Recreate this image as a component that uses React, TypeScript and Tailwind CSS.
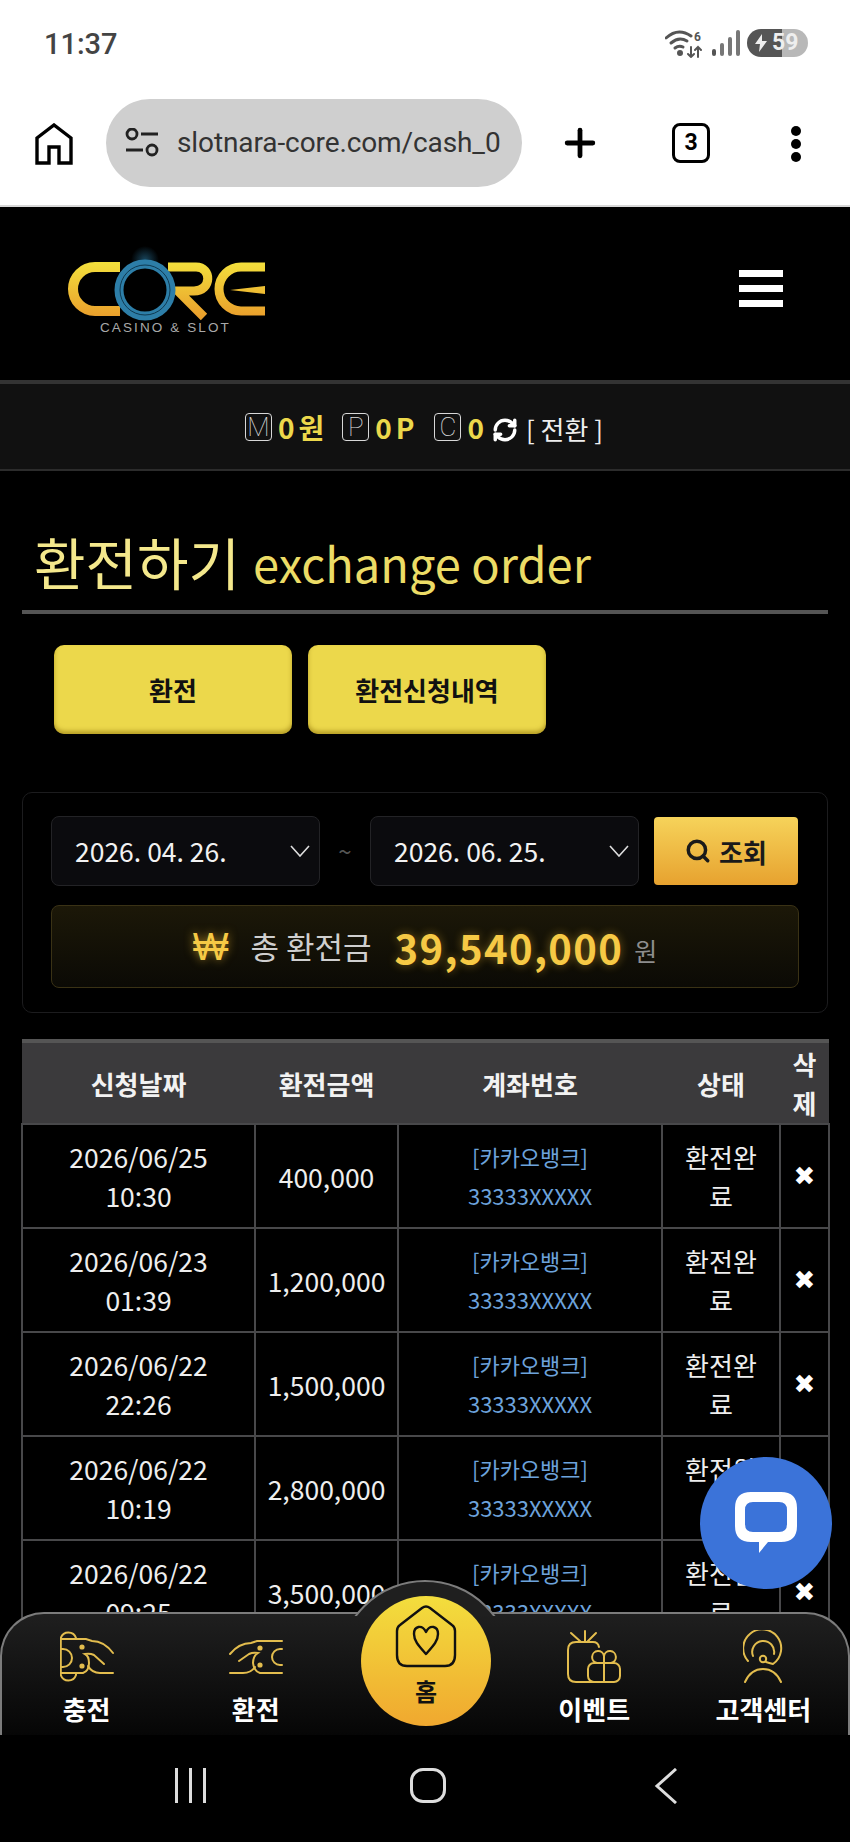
import { Plus, Search, RefreshCw } from "lucide-react";

const rows = [
  { date: "2026/06/25", time: "10:30", amount: "400,000" },
  { date: "2026/06/23", time: "01:39", amount: "1,200,000" },
  { date: "2026/06/22", time: "22:26", amount: "1,500,000" },
  { date: "2026/06/22", time: "10:19", amount: "2,800,000" },
  { date: "2026/06/22", time: "09:25", amount: "3,500,000" },
];

const Logo = () => (
  <svg width="250" height="120" viewBox="0 0 250 120" fill="none" aria-label="CORE CASINO & SLOT">
    <defs>
      <linearGradient id="gold" x1="0" y1="32" x2="0" y2="86" gradientUnits="userSpaceOnUse">
        <stop offset="0" stopColor="#f3e03c" />
        <stop offset="1" stopColor="#eaa02c" />
      </linearGradient>
      <radialGradient id="glow">
        <stop offset="0" stopColor="#2d7ea8" stopOpacity="0.55" />
        <stop offset="1" stopColor="#2d7ea8" stopOpacity="0" />
      </radialGradient>
    </defs>
    <circle cx="105" cy="30" r="14" fill="url(#glow)" />
    <path d="M80 37 H55 A22 22 0 0 0 55 81 H80" stroke="url(#gold)" strokeWidth="10" />
    <path d="M128 37 H156 C172 37 172 61 154 61 H138 L164 87" stroke="url(#gold)" strokeWidth="9" />
    <path d="M225 37 H201 A22 22 0 0 0 201 81 H225" stroke="url(#gold)" strokeWidth="9" />
    <polygon points="190,60 225,56 225,64" fill="url(#gold)" />
    <circle cx="105" cy="60" r="26" stroke="#2d7ea8" strokeWidth="9" fill="#000" />
    <circle cx="105" cy="60" r="25" stroke="#0f3a52" strokeWidth="1" />
    <text x="60" y="102" fill="#a9a9a9" fontSize="13.5" letterSpacing="2.1" fontFamily="'Liberation Sans', sans-serif">
      CASINO &amp; SLOT
    </text>
  </svg>
);

const TopHome = () => (
  <svg width="38" height="42" viewBox="0 0 38 42" fill="none" stroke="#000" strokeWidth="3.4" strokeLinejoin="miter">
    <path d="M2 40 V15 L19 2 L36 15 V40 H24 V24 H14 V40 Z" />
  </svg>
);

const ChargeIcon = () => (
  <svg width="54" height="53" viewBox="0 0 54 53" fill="none" stroke="#e3bd4e" strokeWidth="2" strokeLinecap="round">
    <path d="M16 9 V8 A8 8 0 0 0 0.8 8 V45 A8 8 0 0 0 16 45 V43" />
    <path d="M1 9 H26 L32 11 Q44 11 53 23" />
    <path d="M1 43 H23 Q29 41 29 33 Q29 26 25 24 Q30 23 34 25 L44 34" />
    <path d="M28 36 Q32 43 40 43 H53" />
    <path d="M1 19 H3 A9 9 0 0 1 3 37 H1" />
    <circle cx="22" cy="17" r="1.6" fill="#e3bd4e" />
    <circle cx="22" cy="36" r="1.6" fill="#e3bd4e" />
  </svg>
);

const ExchangeIcon = () => (
  <svg width="54" height="35" viewBox="0 0 54 35" fill="none" stroke="#e3bd4e" strokeWidth="2" strokeLinecap="round">
    <path d="M53 2 H28 L22 4 Q10 4 1 15" />
    <path d="M53 34 H31 Q25 32 24 24 Q24 17 29 14 Q24 13 20 15 L10 22" />
    <path d="M26 28 Q22 34 14 34 H1" />
    <path d="M53 10 H51 A8 8 0 0 0 51 26 H53" />
    <circle cx="31" cy="9" r="1.6" fill="#e3bd4e" />
    <circle cx="31" cy="26" r="1.6" fill="#e3bd4e" />
  </svg>
);

const GiftIcon = () => (
  <svg width="54" height="53" viewBox="0 0 54 53" fill="none" stroke="#e3bd4e" strokeWidth="2" strokeLinecap="round">
    <path d="M18 1 V12 M4 3 L14 12 M29 3 L20 12" />
    <path d="M32 17 Q31 12 26 12 H9 Q1 12 1 20 V44 Q1 52 9 52 H29" />
    <rect x="21" y="33" width="32" height="19" rx="6" />
    <path d="M37 33 V52" />
    <path d="M37 33 H30 A6 6 0 1 1 37 26 Z" />
    <path d="M37 33 H44 A6 6 0 1 0 37 26 Z" />
  </svg>
);

const AgentIcon = () => (
  <svg width="40" height="53" viewBox="0 0 40 53" fill="none" stroke="#e3bd4e" strokeWidth="2" strokeLinecap="round">
    <path d="M5 31 A19 19 0 1 1 30 34 Q26 33 23 32" />
    <path d="M10 26 A11 11 0 1 1 31 24" />
    <circle cx="20" cy="29" r="3.2" />
    <path d="M2 52 C6 43 13 39 20 39 C27 39 34 43 38 52" />
  </svg>
);

const BalanceBadge = ({ letter }: { letter: string }) => (
  <span className="flex h-[28px] w-[27px] items-center justify-center rounded-[4px] border border-[#d8d8d8] font-['Roboto',sans-serif] text-[26px] leading-none font-thin text-[#e0e0e0]">
    {letter}
  </span>
);

const NavItem = ({ icon, label }: { icon: JSX.Element; label: string }) => (
  <div className="flex flex-col items-center">
    <div className="flex h-[53px] items-center">{icon}</div>
    <span className="mt-[8px] text-[26px] leading-[36px] font-bold text-white">{label}</span>
  </div>
);

const thClass = "text-[26px] font-bold text-[#f2f2f2]";
const tdClass = "border-2 border-[#48484a] text-center leading-[39px] bg-black";

export default function App() {
  return (
    <div className="relative h-[1842px] w-[850px] overflow-hidden bg-black font-['Noto_Sans_CJK_KR','Noto_Sans',sans-serif]">
      {/* status bar */}
      <div className="flex h-[85px] items-center justify-between bg-white pr-[42px] pl-[44px]">
        <span className="mt-[4px] font-['Roboto',sans-serif] text-[29px] font-medium text-[#444]">11:37</span>
        <div className="flex items-center gap-[7px]">
          <svg width="40" height="30" viewBox="0 0 40 30" fill="none" stroke="#555" strokeWidth="3" strokeLinecap="round">
            <path d="M1 10 Q13 -1 26 8" />
            <path d="M6 15 Q14 8 22 13" />
            <path d="M10 20 Q14 17 18 19" />
            <circle cx="15" cy="25" r="1.5" fill="#555" />
            <path d="M26 19 V29 M23 26 L26 29 L29 26 M33 29 V19 M30 22 L33 19 L36 22" strokeWidth="2" />
            <text x="29" y="13" fontSize="12" fontWeight="700" fill="#555" stroke="none" fontFamily="Roboto, sans-serif">6</text>
          </svg>
          <div className="flex h-[26px] items-end gap-[4px]">
            <span className="h-[7px] w-[4px] rounded-sm bg-[#555]" />
            <span className="h-[13px] w-[4px] rounded-sm bg-[#777]" />
            <span className="h-[19px] w-[4px] rounded-sm bg-[#777]" />
            <span className="h-[26px] w-[4px] rounded-sm bg-[#777]" />
          </div>
          <div className="flex h-[28px] w-[61px] items-center overflow-hidden rounded-full bg-[linear-gradient(90deg,#555_57%,#b8b8b8_57%)] pl-[8px]">
            <svg width="12" height="18" viewBox="0 0 12 18" fill="#eee">
              <path d="M7 0 L0 10 H5 L4 18 L12 7 H7 Z" />
            </svg>
            <span className="ml-[5px] font-['Roboto',sans-serif] text-[23px] leading-none font-bold text-[#eee]">59</span>
          </div>
        </div>
      </div>

      {/* browser bar */}
      <div className="flex h-[122px] items-start border-b-2 border-[#d8d8d8] bg-white pt-[14px]">
        <div className="mt-[24px] ml-[35px] flex w-[71px] items-start">
          <TopHome />
        </div>
        <div className="flex h-[88px] w-[416px] items-center overflow-hidden rounded-full bg-[#cfcfcf] pl-[19px]">
          <svg width="34" height="30" viewBox="0 0 34 30" fill="none" stroke="#222" strokeWidth="2.8" className="shrink-0">
            <circle cx="7" cy="6" r="5" />
            <path d="M16 6 H33 M1 22 H18" />
            <circle cx="27" cy="22" r="5" />
          </svg>
          <span className="ml-[18px] w-[326px] overflow-hidden font-['Roboto',sans-serif] text-[28px] tracking-[-0.1px] whitespace-nowrap text-[#333]">
            slotnara-core.com/cash_0
          </span>
        </div>
        <Plus size={44} strokeWidth={2.6} color="#000" className="mt-[22px] ml-[36px]" />
        <div className="mt-[24px] ml-[70px] flex h-[40px] w-[38px] items-center justify-center rounded-[8px] border-[3.5px] border-black font-['Roboto',sans-serif] text-[23px] font-bold text-black">
          3
        </div>
        <div className="mt-[27px] ml-[81px] flex flex-col gap-[3px]">
          <span className="h-[10px] w-[10px] rounded-full bg-black" />
          <span className="h-[10px] w-[10px] rounded-full bg-black" />
          <span className="h-[10px] w-[10px] rounded-full bg-black" />
        </div>
      </div>

      {/* site header */}
      <div className="flex h-[173px] items-center justify-between pr-[67px] pl-[40px]">
        <div className="mb-[8px]">
          <Logo />
        </div>
        <div className="mb-[10px] flex flex-col gap-[8px]">
          <span className="h-[7px] w-[44px] bg-white" />
          <span className="h-[7px] w-[44px] bg-white" />
          <span className="h-[7px] w-[44px] bg-white" />
        </div>
      </div>

      {/* balance bar */}
      <div className="flex h-[91px] items-center justify-center border-t-[4px] border-b-2 border-t-[#333] border-b-[#2c2c2c] bg-[#111] pr-[2px]">
        <BalanceBadge letter="M" />
        <span className="ml-[6px] text-[28px] font-bold tracking-[4px] text-[#ecd84b]">0원</span>
        <span className="ml-[14px]">
          <BalanceBadge letter="P" />
        </span>
        <span className="ml-[6px] text-[28px] font-bold tracking-[4px] text-[#ecd84b]">0P</span>
        <span className="ml-[16px]">
          <BalanceBadge letter="C" />
        </span>
        <span className="ml-[6px] text-[28px] font-bold text-[#ecd84b]">0</span>
        <RefreshCw size={26} strokeWidth={3.2} color="#fff" className="mt-[6px] ml-[8px]" />
        <span className="mt-[4px] ml-[8px] text-[26px] text-[#eee]">[ 전환 ]</span>
      </div>

      {/* page title */}
      <div className="mx-[22px] flex h-[143px] items-end border-b-[4px] border-[#555] pb-[11px] pl-[12px]">
        <h1 className="text-[56px] leading-[76px] font-normal text-[#f4e88c]">환전하기</h1>
        <span className="ml-[13px] text-[47px] leading-[72px] text-[#ecdc66]">exchange order</span>
      </div>

      {/* tabs */}
      <div className="mt-[31px] ml-[54px] flex gap-[16px]">
        <button className="h-[89px] w-[238px] rounded-[10px] bg-[#ecd84b] text-[26px] font-bold text-[#111] shadow-[inset_0_-3px_4px_rgba(130,100,0,0.5)]">
          환전
        </button>
        <button className="h-[89px] w-[238px] rounded-[10px] bg-[#ecd84b] text-[26px] font-bold text-[#111] shadow-[inset_0_-3px_4px_rgba(130,100,0,0.5)]">
          환전신청내역
        </button>
      </div>

      {/* filter panel */}
      <div className="mx-[22px] mt-[58px] rounded-[10px] border border-[#1c1c1e] px-[28px] pt-[23px] pb-[24px]">
        <div className="flex items-center">
          <div className="flex h-[70px] w-[269px] items-center justify-between rounded-[8px] border border-[#232326] bg-[#0b0b0e] pr-[9px] pl-[23px] text-[26.5px] text-[#f2f2f2]">
            2026. 04. 26.
            <svg width="20" height="12" viewBox="0 0 20 12" fill="none" stroke="#ddd" strokeWidth="1.6">
              <path d="M1 1 L10 11 L19 1" />
            </svg>
          </div>
          <span className="w-[50px] text-center text-[24px] text-[#555]">~</span>
          <div className="flex h-[70px] w-[269px] items-center justify-between rounded-[8px] border border-[#232326] bg-[#0b0b0e] pr-[9px] pl-[23px] text-[26.5px] text-[#f2f2f2]">
            2026. 06. 25.
            <svg width="20" height="12" viewBox="0 0 20 12" fill="none" stroke="#ddd" strokeWidth="1.6">
              <path d="M1 1 L10 11 L19 1" />
            </svg>
          </div>
          <button className="ml-[15px] flex h-[68px] w-[144px] items-center justify-center gap-[8px] rounded-[4px] bg-[linear-gradient(180deg,#f6d35a,#e7a22f)] text-[26px] font-bold text-[#1a1a1a]">
            <Search size={26} strokeWidth={3.2} color="#1a1a1a" />
            조회
          </button>
        </div>
        <div className="mt-[19px] flex h-[83px] items-center justify-center rounded-[8px] border border-[#3a3215] bg-[linear-gradient(180deg,#1c1808,#0b0a05)]">
          <span className="font-['Liberation_Sans',sans-serif] text-[38px] leading-none text-[#f6c945] [text-shadow:0_0_10px_rgba(246,190,50,0.6)]">₩</span>
          <span className="ml-[22px] text-[31px] text-[#cfcfcf]">총 환전금</span>
          <span className="ml-[23px] text-[40px] leading-none font-bold tracking-[1.4px] text-[#f6c945] [text-shadow:0_0_10px_rgba(246,190,50,0.45)]">39,540,000</span>
          <span className="mt-[8px] ml-[11px] text-[25px] text-[#8d8d8d]">원</span>
        </div>
      </div>

      {/* history table */}
      <table className="mt-[26px] ml-[21px] w-[807px] table-fixed border-collapse">
        <colgroup>
          <col className="w-[233px]" />
          <col className="w-[143px]" />
          <col className="w-[264px]" />
          <col className="w-[118px]" />
          <col className="w-[49px]" />
        </colgroup>
        <thead>
          <tr className="h-[83px] border-t-[4px] border-[#555] bg-[#3b3a3c]">
            <th className={thClass}>신청날짜</th>
            <th className={thClass}>환전금액</th>
            <th className={thClass}>계좌번호</th>
            <th className={thClass}>상태</th>
            <th className={`${thClass} px-[6px] leading-[39px]`}>삭제</th>
          </tr>
        </thead>
        <tbody>
          {rows.map((row, idx) => (
            <tr key={idx} className="h-[104px]">
              <td className={`${tdClass} text-[26.5px] text-[#eee]`}>
                {row.date}
                <br />
                {row.time}
              </td>
              <td className={`${tdClass} text-[26.5px] whitespace-nowrap text-[#eee]`}>{row.amount}</td>
              <td className={`${tdClass} text-[22px] text-[#6da3dc]`}>
                [카카오뱅크]
                <br />
                33333XXXXX
              </td>
              <td className={`${tdClass} px-[12px] text-[26px] text-[#eee]`}>환전완료</td>
              <td className={`${tdClass} font-['DejaVu_Sans',sans-serif] text-[26px] text-white`}>✖</td>
            </tr>
          ))}
        </tbody>
      </table>

      {/* chat button */}
      <div className="absolute top-[1457px] left-[700px] z-30 flex h-[132px] w-[132px] items-center justify-center rounded-full bg-[#3b73d9]">
        <svg width="62" height="62" viewBox="0 0 62 62" fill="none">
          <path
            d="M16 0 H46 Q62 0 62 16 V34 Q62 50 46 50 H33 L24 61 L24 50 H16 Q0 50 0 34 V16 Q0 0 16 0 Z M18 10 Q10 10 10 18 V32 Q10 40 18 40 H44 Q52 40 52 32 V18 Q52 10 44 10 Z"
            fill="#fff"
            fillRule="evenodd"
          />
        </svg>
      </div>

      {/* bottom nav */}
      <div className="absolute bottom-[107px] left-0 z-20 h-[123px] w-[850px] rounded-t-[44px] border-x-2 border-t-2 border-[#7c7c7c] bg-[linear-gradient(180deg,#1f1f1f,#060606)]">
        <div className="absolute top-[-34px] left-[330px] h-[36px] w-[186px] overflow-hidden">
          <div className="absolute top-0 left-[6px] h-[174px] w-[174px] rounded-full border-2 border-[#7c7c7c] bg-[#1f1f1f]" />
        </div>
        <div className="absolute top-[-18px] left-[359px] flex h-[130px] w-[130px] flex-col items-center rounded-full bg-[linear-gradient(180deg,#f3de3d,#f0a82f)] pt-[9px]">
          <svg width="62" height="63" viewBox="0 0 62 63" fill="none" stroke="#111" strokeWidth="2.4" strokeLinejoin="round">
            <path d="M27 3 Q31 0 35 3 L57 20 Q60 22 60 26 V50 Q60 61 50 61 H12 Q2 61 2 50 V26 Q2 22 5 20 Z" />
            <path d="M31 49 C24 41 19 36 19 29 C19 21 27 19 31 27 C35 19 43 21 43 29 C43 36 38 41 31 49 Z" />
          </svg>
          <span className="mt-[7px] text-[24px] leading-[32px] font-bold text-[#111]">홈</span>
        </div>
        <div className="grid grid-cols-5 pt-[16px]">
          <NavItem icon={<ChargeIcon />} label="충전" />
          <NavItem icon={<ExchangeIcon />} label="환전" />
          <div />
          <NavItem icon={<GiftIcon />} label="이벤트" />
          <NavItem icon={<AgentIcon />} label="고객센터" />
        </div>
      </div>

      {/* android nav */}
      <div className="absolute bottom-0 left-0 z-20 flex h-[107px] w-[850px] items-start bg-black pt-[33px]">
        <div className="ml-[175px] flex h-[35px] gap-[11px]">
          <span className="h-[35px] w-[3px] bg-[#ddd]" />
          <span className="h-[35px] w-[3px] bg-[#ddd]" />
          <span className="h-[35px] w-[3px] bg-[#ddd]" />
        </div>
        <div className="ml-[204px] h-[35px] w-[36px] rounded-[13px] border-[3px] border-[#ddd]" />
        <svg width="24" height="36" viewBox="0 0 24 36" fill="none" stroke="#ddd" strokeWidth="3" className="ml-[208px]">
          <path d="M22 1 L3 18 L22 35" />
        </svg>
      </div>
    </div>
  );
}
